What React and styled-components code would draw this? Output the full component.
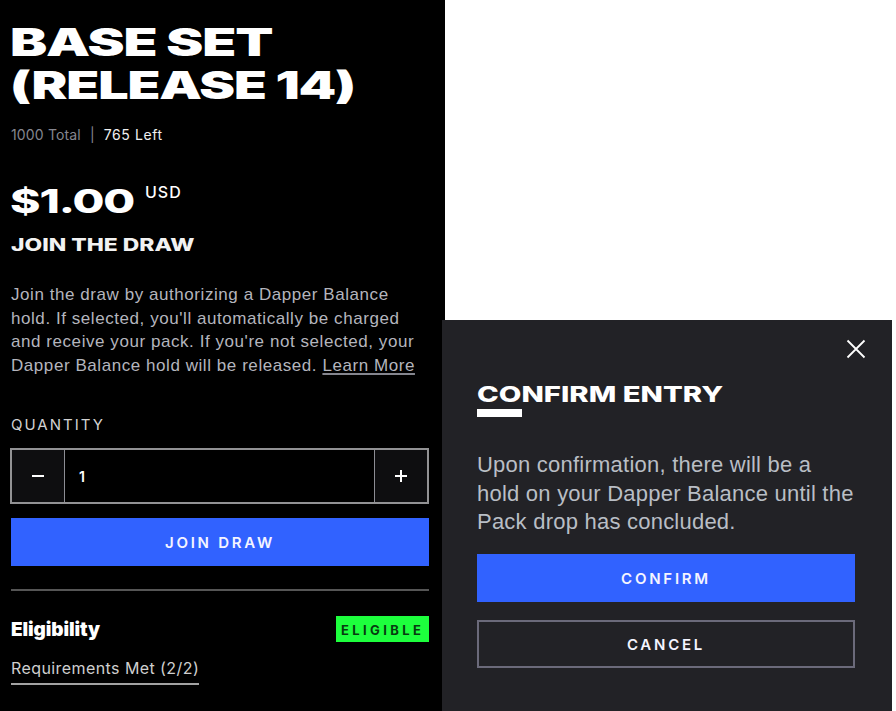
import styled, { createGlobalStyle } from 'styled-components';

const GlobalStyle = createGlobalStyle`
    * {
        box-sizing: border-box;
    }

    body {
        margin: 0;
        background: #fff;
        overflow: hidden;
    }

    h1, h2, h3, p {
        margin: 0;
    }

    button {
        padding: 0;
        border: 0;
        border-radius: 0;
    }
`

const Page = styled.div`
    display: flex;
    align-items: flex-end;
    width: 896px;
    height: 711px;
    background: linear-gradient(#000, #000) 442px 0 / 3px 320px no-repeat, #fff;
    font-family: "Liberation Sans", Arial, sans-serif;
    color: #fff;
`

const PackPanel = styled.section`
    width: 442px;
    height: 711px;
    padding: 21px 13px 0 11px;
    background: #000;
`

// Inter has no expanded cut, so the headings are stretched from the left edge
const Wide = styled.span`
    display: inline-block;
    font-family: Inter, sans-serif;
    font-weight: ${({ $weight }) => $weight || 800};
    white-space: nowrap;
    transform: scaleX(${({ $stretch }) => $stretch});
    transform-origin: left center;
`

const Title = styled.h1`
    display: flex;
    flex-direction: column;
    align-items: flex-start;
    margin-left: -1px;
    font-size: 38px;
    line-height: 43px;
    letter-spacing: -0.8px;
`

const Supply = styled.p`
    display: flex;
    gap: 9px;
    margin-top: 19px;
    font-family: Inter, sans-serif;
    font-size: 14px;
    line-height: 18px;
    letter-spacing: 0.15px;
    color: #85868f;

    strong {
        font-weight: 400;
        letter-spacing: 0.6px;
        color: #f0f0f0;
    }
`

const Price = styled.div`
    display: flex;
    height: 40px;
    margin-top: 37px;
    font-size: 33px;
    line-height: 40px;

    .amount {
        width: 135px;
        margin-left: -1px;
        letter-spacing: -0.8px;
    }

    .currency {
        font-family: Inter, sans-serif;
        font-size: 16px;
        font-weight: 500;
        line-height: 22px;
        letter-spacing: 1px;
    }
`

const Subtitle = styled.h2`
    margin-top: 13px;
    font-size: 17px;
    line-height: 22px;
    color: #f2f2f2;
`

const Description = styled.p`
    margin-top: 26px;
    font-size: 17px;
    line-height: 23.6px;
    letter-spacing: 0.56px;
    white-space: nowrap;
    color: #b4b5bd;

    a {
        text-decoration: underline 2px #85868f;
        text-decoration-skip-ink: none;
        text-underline-offset: 2px;
    }
`

const QuantityLabel = styled.p`
    margin-top: 38px;
    font-family: Inter, sans-serif;
    font-size: 15px;
    line-height: 20px;
    letter-spacing: 2px;
    color: #d2d2d2;
`

const Stepper = styled.div`
    display: flex;
    height: 56px;
    margin-top: 13px;
    margin-left: -1px;
    border: 2px solid #929294;
`

const StepButton = styled.button`
    display: flex;
    align-items: center;
    justify-content: center;
    width: 52px;
    background: #0e0e10;
`

const Quantity = styled.div`
    flex: 1;
    padding-left: 14px;
    border: solid #8c8d94;
    border-width: 0 1px;
    font: 600 14px/54px Inter, sans-serif;
`

const Button = styled.button`
    display: block;
    width: 100%;
    height: 48px;
    padding-top: 2px;
    background: ${({ $outline }) => ($outline ? 'transparent' : '#3162ff')};
    border: ${({ $outline }) => ($outline ? '2px solid #6b6a7a' : '0')};
    font: 600 15px/20px Inter, sans-serif;
    letter-spacing: 2.75px;
    color: #f4f4ff;
`

const JoinButton = styled(Button)`
    margin-top: 14px;
`

const Divider = styled.hr`
    height: 2px;
    margin: 23px 0 0;
    border: 0;
    background: #555;
`

const EligibilityRow = styled.div`
    display: flex;
    align-items: center;
    justify-content: space-between;
    height: 26px;
    margin-top: 25px;

    h3 {
        font-family: Inter, sans-serif;
        font-size: 19px;
        font-weight: 900;
        letter-spacing: -0.1px;
    }
`

const Badge = styled.span`
    width: 93px;
    height: 26px;
    padding-left: 5px;
    background: #1dff3d;
    font: 700 13px/28px Inter, sans-serif;
    letter-spacing: 3.4px;
    color: #073b10;
`

const Requirements = styled.a`
    display: inline-block;
    height: 30px;
    margin-top: 13px;
    border-bottom: 2px solid #a2a2a2;
    font: 400 16px/26px Inter, sans-serif;
    letter-spacing: 0.42px;
    white-space: nowrap;
    color: #cfcfcf;
`

const Modal = styled.section`
    width: 450px;
    height: 391px;
    padding: 19px 37px 0 35px;
    background: #222226;
`

const CloseButton = styled.button`
    display: block;
    width: 20px;
    height: 20px;
    margin: 0 -11px 0 auto;
    background: none;

    svg {
        display: block;
    }
`

const ModalTitle = styled.h2`
    margin-top: 22px;
    font-size: 22px;
    line-height: 27px;

    &::after {
        content: '';
        display: block;
        width: 45px;
        height: 8px;
        margin-top: 1px;
        background: #fff;
    }
`

const ModalText = styled.p`
    margin: 34px 0 17px;
    font-size: 22px;
    line-height: 28.5px;
    letter-spacing: 0.23px;
    white-space: nowrap;
    color: #b9bec5;
`

const CancelButton = styled(Button)`
    margin-top: 18px;
`

const Icon = ({ size, d, width }) => (
    <svg width={size} height={size} viewBox={`0 0 ${size} ${size}`} fill="none" stroke="#fff" strokeWidth={width}>
        <path d={d} />
    </svg>
)

const PackDetails = () => (
    <PackPanel>
        <Title>
            <Wide $weight={900} $stretch={1.465}>BASE SET</Wide>
            <Wide $weight={900} $stretch={1.415}>(RELEASE 14)</Wide>
        </Title>
        <Supply>
            <span>1000 Total</span>
            <span>|</span>
            <strong>765 Left</strong>
        </Supply>
        <Price>
            <Wide className="amount" $stretch={1.4}>$1.00</Wide>
            <span className="currency">USD</span>
        </Price>
        <Subtitle>
            <Wide $stretch={1.345}>JOIN THE DRAW</Wide>
        </Subtitle>
        <Description>
            Join the draw by authorizing a Dapper Balance<br />
            hold. If selected, you'll automatically be charged<br />
            and receive your pack. If you're not selected, your<br />
            Dapper Balance hold will be released. <a>Learn More</a>
        </Description>
        <QuantityLabel>QUANTITY</QuantityLabel>
        <Stepper>
            <StepButton aria-label="Decrease">
                <Icon size={14} d="M1 7h12" width={2} />
            </StepButton>
            <Quantity>1</Quantity>
            <StepButton aria-label="Increase">
                <Icon size={14} d="M1 7h12M7 1v12" width={2} />
            </StepButton>
        </Stepper>
        <JoinButton>JOIN DRAW</JoinButton>
        <Divider />
        <EligibilityRow>
            <h3>Eligibility</h3>
            <Badge>ELIGIBLE</Badge>
        </EligibilityRow>
        <Requirements>Requirements Met (2/2)</Requirements>
    </PackPanel>
)

const ConfirmModal = () => (
    <Modal>
        <CloseButton aria-label="Close">
            <Icon size={20} d="M1.5 1.5l17 17M18.5 1.5l-17 17" width={1.8} />
        </CloseButton>
        <ModalTitle>
            <Wide $stretch={1.33}>CONFIRM ENTRY</Wide>
        </ModalTitle>
        <ModalText>
            Upon confirmation, there will be a<br />
            hold on your Dapper Balance until the<br />
            Pack drop has concluded.
        </ModalText>
        <Button>CONFIRM</Button>
        <CancelButton $outline>CANCEL</CancelButton>
    </Modal>
)

export default function App() {
    return (
        <>
            <GlobalStyle />
            <Page>
                <PackDetails />
                <ConfirmModal />
            </Page>
        </>
    )
}
